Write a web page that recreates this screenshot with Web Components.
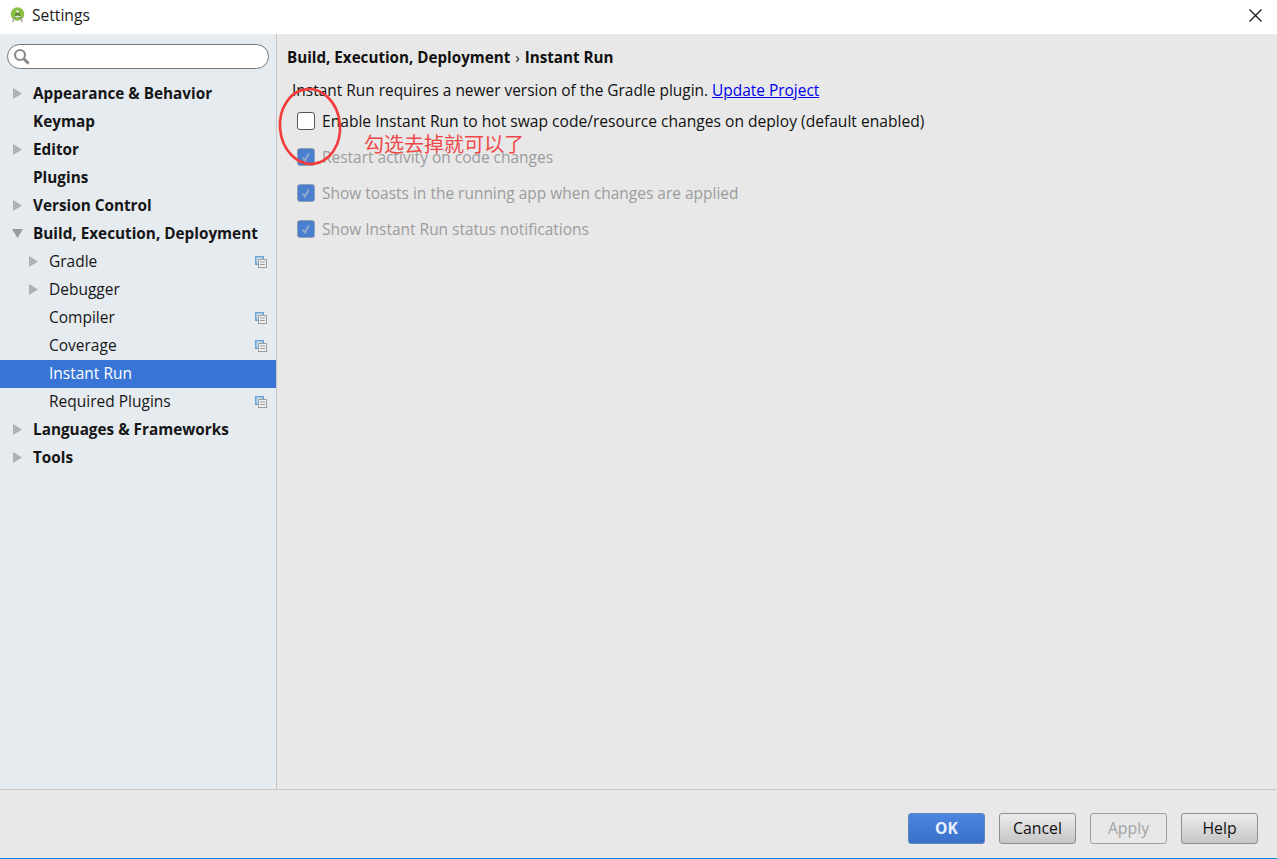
<!DOCTYPE html>
<html>
<head>
<meta charset="utf-8">
<title>Settings</title>
<style>
  html, body { margin: 0; height: 100%; }
  body { font-family: "Open Sans", "Noto Sans", sans-serif; font-size: 15.45px; overflow: hidden; }
</style>
</head>
<body>
<settings-dialog>
  <nav-item slot="nav" bold arrow="right">Appearance &amp; Behavior</nav-item>
  <nav-item slot="nav" bold>Keymap</nav-item>
  <nav-item slot="nav" bold arrow="right">Editor</nav-item>
  <nav-item slot="nav" bold>Plugins</nav-item>
  <nav-item slot="nav" bold arrow="right">Version Control</nav-item>
  <nav-item slot="nav" bold arrow="down">Build, Execution, Deployment</nav-item>
  <nav-item slot="nav" child arrow="right" copy>Gradle</nav-item>
  <nav-item slot="nav" child arrow="right">Debugger</nav-item>
  <nav-item slot="nav" child copy>Compiler</nav-item>
  <nav-item slot="nav" child copy>Coverage</nav-item>
  <nav-item slot="nav" child selected>Instant Run</nav-item>
  <nav-item slot="nav" child copy>Required Plugins</nav-item>
  <nav-item slot="nav" bold arrow="right">Languages &amp; Frameworks</nav-item>
  <nav-item slot="nav" bold arrow="right">Tools</nav-item>

  <instant-run-panel slot="content"></instant-run-panel>

  <dialog-button slot="buttons" kind="primary">OK</dialog-button>
  <dialog-button slot="buttons">Cancel</dialog-button>
  <dialog-button slot="buttons" kind="disabled">Apply</dialog-button>
  <dialog-button slot="buttons">Help</dialog-button>
</settings-dialog>

<script>
// Ventana completa: barra de título, columnas y pie con botones
class SettingsDialog extends HTMLElement {
  constructor() {
    super();
    this.attachShadow({ mode: 'open' });
    this.shadowRoot.innerHTML = `
      <style>
        :host { display: flex; flex-direction: column; height: 859px; background: #e8e8e8; color: #000; }
        .title { height: 34px; flex: none; box-sizing: border-box; padding: 0 0 4px 10px; background: #fff; display: flex; align-items: center; gap: 7px; font-size: 15.6px; color: #1a1a1a; }
        .title svg.logo { width: 15px; height: 16px; }
        .title .close { margin-left: auto; margin-right: 15px; width: 13px; height: 13px; }
        .main { flex: 1; display: flex; min-height: 0; }
        .side { width: 276px; flex: none; background: #e6ebf0; border-right: 1px solid #c5c5c5; padding-top: 10px; }
        .search { margin: 0 7px; height: 25px; box-sizing: border-box; background: #fff; border: 1px solid #777; border-radius: 13px; display: flex; align-items: center; padding-left: 5px; }
        .search svg { width: 17px; height: 17px; }
        .tree { margin-top: 11px; display: flex; flex-direction: column; }
        .content { flex: 1; min-width: 0; }
        .foot { height: 69px; flex: none; border-top: 1px solid #c8c8c8; display: flex; justify-content: flex-end; align-items: flex-start; padding: 23px 19px 0 0; gap: 14px; box-sizing: border-box; }
        .bar { height: 1px; flex: none; background: #1f88d8; }
      </style>
      <div class="title">
        <svg class="logo" viewBox="0 0 15 16">
          <circle cx="7.5" cy="7" r="6.8" fill="#8cbf45"/>
          <path d="M4.6 11 7.5 4.5 10.4 11" fill="none" stroke="#4d6b33" stroke-width="1.5"/>
          <path d="M4.2 10.5 2.8 15M10.8 10.5 12.2 15" stroke="#a8a8a8" stroke-width="1.5"/>
          <path d="M4.5 9.5H10.5" stroke="#dfe9cf" stroke-width="1.2"/>
          <circle cx="7.5" cy="4.6" r="1.3" fill="#eef5e0"/>
        </svg>
        <span>Settings</span>
        <svg class="close" viewBox="0 0 13 13"><path d="M.5 .5 12.5 12.5M12.5 .5 .5 12.5" stroke="#111" stroke-width="1.2"/></svg>
      </div>
      <div class="main">
        <div class="side">
          <div class="search">
            <svg viewBox="0 0 17 17"><circle cx="7" cy="7" r="5" fill="none" stroke="#8c8c8c" stroke-width="2.2"/><path d="M10.8 10.8 15.6 15.6" stroke="#8c8c8c" stroke-width="3"/></svg>
          </div>
          <div class="tree"><slot name="nav"></slot></div>
        </div>
        <div class="content"><slot name="content"></slot></div>
      </div>
      <div class="foot"><slot name="buttons"></slot></div>
      <div class="bar"></div>
    `;
  }
}

// Fila del árbol lateral
class NavItem extends HTMLElement {
  constructor() {
    super();
    this.attachShadow({ mode: 'open' });
  }

  connectedCallback() {
    const arrow = this.getAttribute('arrow');
    const shape = arrow === 'down'
      ? '<path d="M0 1H11L5.5 10Z" fill="#9a9a9a"/>'
      : arrow === 'right' ? '<path d="M1 0V11L10 5.5Z" fill="#b0b0b0"/>' : '';
    const copy = this.hasAttribute('copy') ? `
      <svg class="copy" viewBox="0 0 12 12">
        <rect x=".75" y=".75" width="7.5" height="7.5" fill="#cfe0ef" stroke="#6fa5d4" stroke-width="1.5"/>
        <rect x="3.5" y="3.5" width="8" height="8" fill="#eef0f2" stroke="#9c9c9c"/>
        <path d="M5 6H10M5 8.5H10" stroke="#9c9c9c"/>
      </svg>` : '';
    this.shadowRoot.innerHTML = `
      <style>
        :host { display: flex; align-items: center; height: 28px; position: relative; color: #161616; font-size: 15.5px; }
        :host([bold]) { font-weight: 700; font-size: 15.3px; }
        :host([selected]) { background: #3875d7; color: #fff; }
        .arrow { position: absolute; left: 12px; top: 8px; width: 11px; height: 11px; }
        :host([child]) .arrow { left: 28px; }
        .label { padding: 0 0 2px 33px; white-space: nowrap; }
        :host([child]) .label { padding-left: 49px; }
        .copy { position: absolute; left: 255px; top: 8px; width: 12px; height: 12px; }
      </style>
      ${shape ? `<svg class="arrow" viewBox="0 0 11 11">${shape}</svg>` : ''}
      <span class="label"><slot></slot></span>
      ${copy}
    `;
  }
}

// Casilla con texto, activa o atenuada
class CheckRow extends HTMLElement {
  constructor() {
    super();
    this.attachShadow({ mode: 'open' });
  }

  connectedCallback() {
    const on = this.hasAttribute('checked');
    this.shadowRoot.innerHTML = `
      <style>
        :host { display: flex; align-items: center; gap: 7px; height: 36px; color: #111; font-size: 15.6px; white-space: nowrap; }
        :host([disabled]) { color: #9c9c9c; font-size: 15.47px; }
        .box { width: 18px; height: 18px; box-sizing: border-box; border-radius: 3px; border: 1px solid #555; background: #fff; flex: none; }
        .box.on { background: #4a7fd0; border-color: #8f9fb5; }
        .box svg { display: block; width: 16px; height: 16px; }
      </style>
      <span class="box ${on ? 'on' : ''}">${on ? '<svg viewBox="0 0 16 16"><path d="M4.8 8.5 7 11.5 11 4.5" fill="none" stroke="#93a9c9" stroke-width="2"/></svg>' : ''}</span>
      <span><slot></slot></span>
    `;
  }
}

// Panel derecho de Instant Run
class InstantRunPanel extends HTMLElement {
  constructor() {
    super();
    this.attachShadow({ mode: 'open' });
    this.shadowRoot.innerHTML = `
      <style>
        :host { display: block; position: relative; height: 100%; padding: 13px 0 0 10px; box-sizing: border-box; }
        h1 { margin: 0; font-size: 15.2px; font-weight: 700; color: #111; line-height: 20px; white-space: nowrap; }
        h1 .sep { font-weight: 400; margin: 0 1px; }
        p { margin: 13px 0 0 5px; line-height: 20px; color: #111; white-space: nowrap; }
        a { color: #0000ee; text-decoration: underline; }
        .rows { margin: 3px 0 0 10px; }
        .note { position: absolute; left: 87px; top: 97px; font: 20px "Noto Sans CJK SC", sans-serif; color: #f04848; white-space: nowrap; line-height: 26px; }
        .ring { position: absolute; left: 1px; top: 50px; width: 66px; height: 84px; overflow: visible; pointer-events: none; }
      </style>
      <h1>Build, Execution, Deployment <span class="sep">›</span> Instant Run</h1>
      <p>Instant Run requires a newer version of the Gradle plugin. <a href="#">Update Project</a></p>
      <div class="rows">
        <check-row>Enable Instant Run to hot swap code/resource changes on deploy (default enabled)</check-row>
        <check-row checked disabled>Restart activity on code changes</check-row>
        <check-row checked disabled>Show toasts in the running app when changes are applied</check-row>
        <check-row checked disabled>Show Instant Run status notifications</check-row>
      </div>
      <svg class="ring" viewBox="0 0 66 84"><ellipse cx="32" cy="42.5" rx="30" ry="37.5" transform="rotate(-5 32 42.5)" fill="none" stroke="#f23c3c" stroke-width="2.6"/></svg>
      <span class="note">勾选去掉就可以了</span>
    `;
  }
}

// Botón del pie
class DialogButton extends HTMLElement {
  constructor() {
    super();
    this.attachShadow({ mode: 'open' });
    this.shadowRoot.innerHTML = `
      <style>
        :host { display: flex; align-items: center; justify-content: center; width: 77px; height: 31px; box-sizing: border-box; padding-bottom: 1px; border-radius: 3px; border: 1px solid #8f8f8f; background: linear-gradient(#ececec, #c6c6c6); font-size: 15.8px; color: #111; }
        :host([kind="primary"]) { background: linear-gradient(#4c85e0, #3a70c8); border-color: #5f86bf; color: #e8f0fb; font-weight: 700; font-size: 15.6px; }
        :host([kind="disabled"]) { background: #e8e8e8; color: #a3a3a3; border-color: #a0a0a0; }
      </style>
      <slot></slot>
    `;
  }
}

customElements.define('nav-item', NavItem);
customElements.define('check-row', CheckRow);
customElements.define('dialog-button', DialogButton);
customElements.define('instant-run-panel', InstantRunPanel);
customElements.define('settings-dialog', SettingsDialog);
</script>
</body>
</html>
